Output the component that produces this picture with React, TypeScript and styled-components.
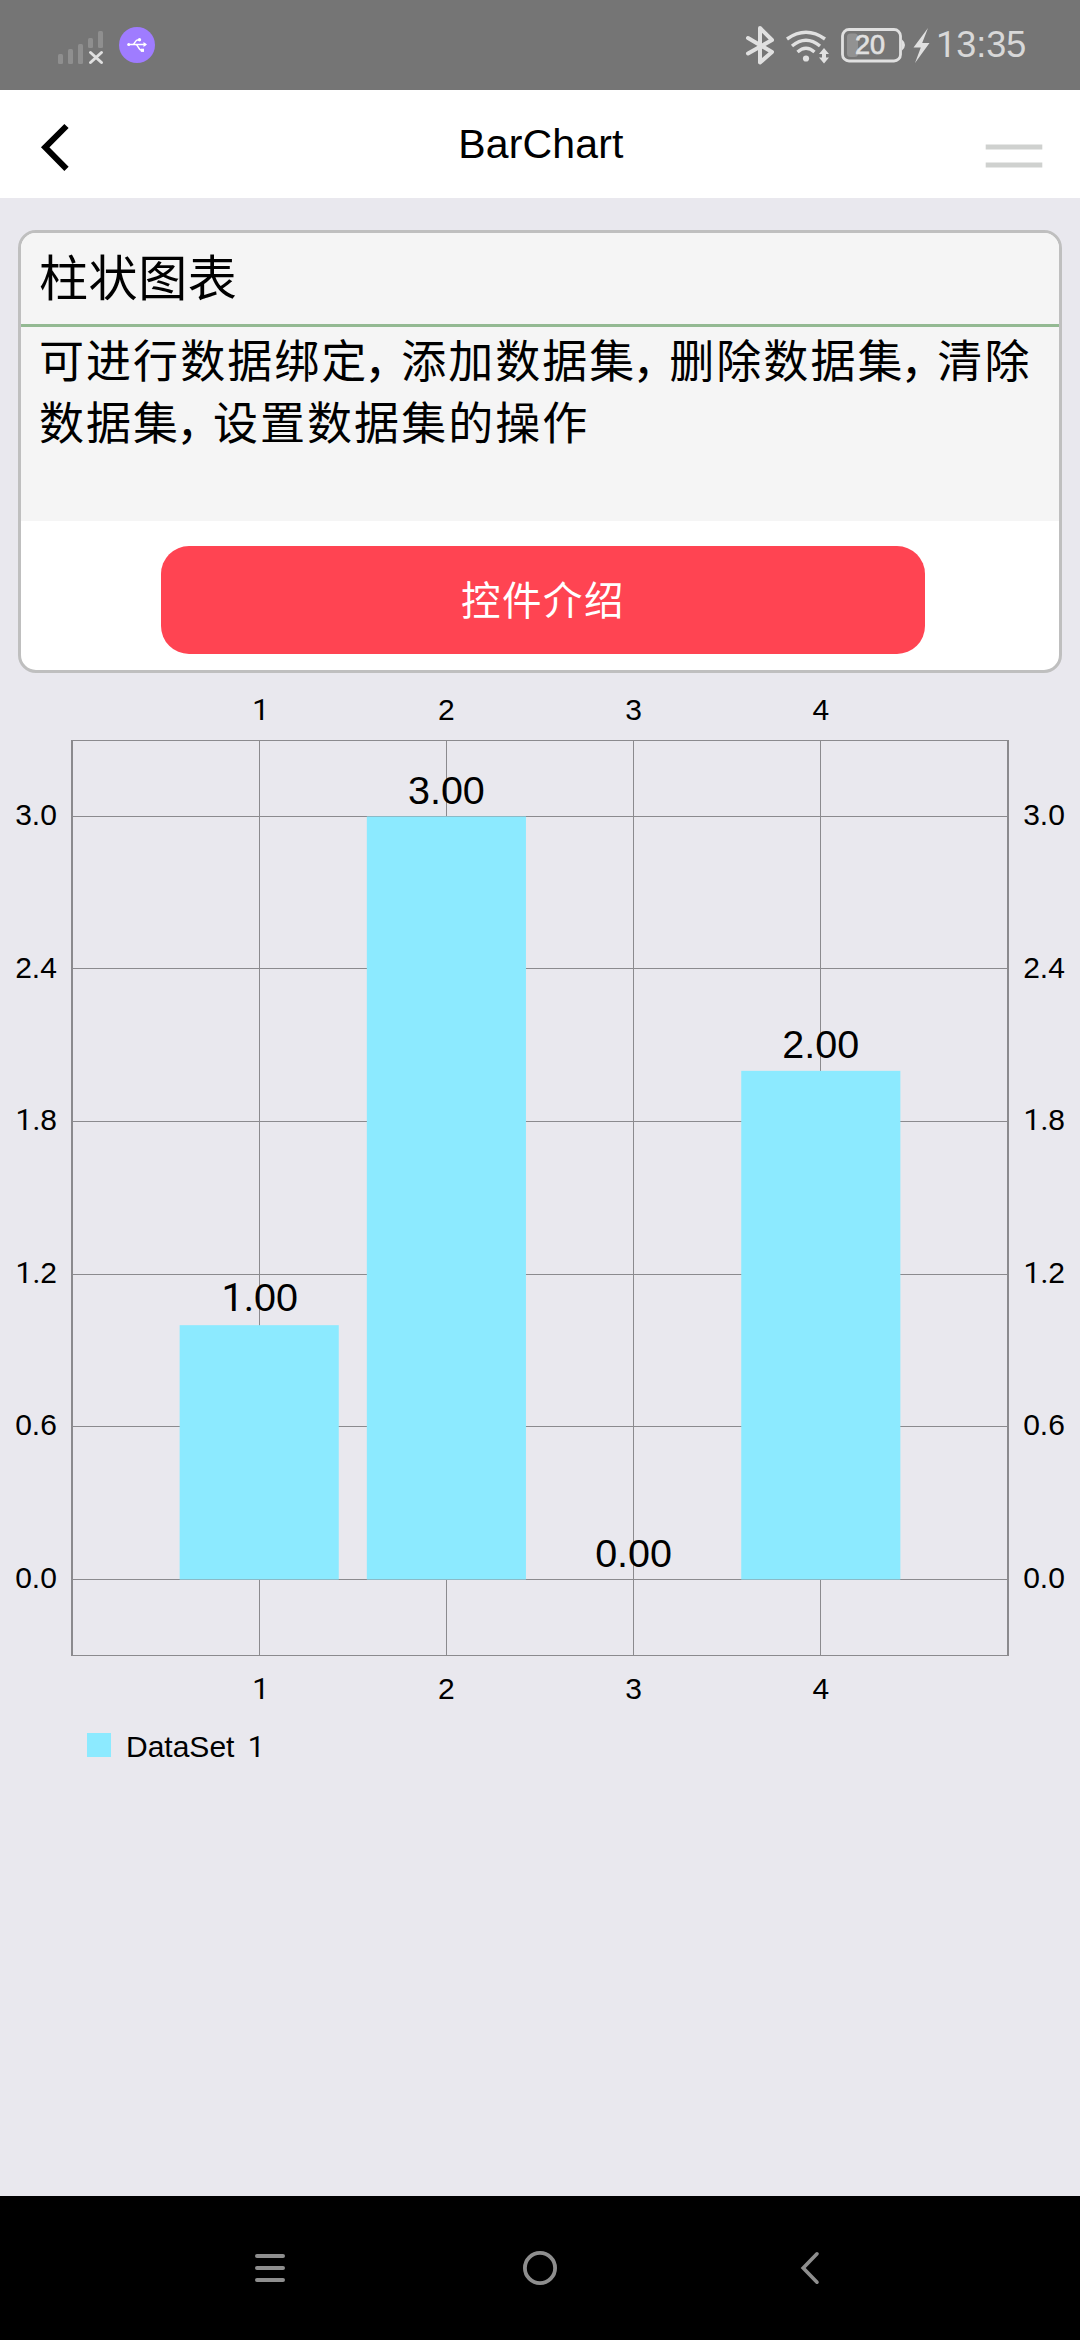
import React from "react";
import styled, { createGlobalStyle } from "styled-components";

const LATIN = `"Liberation Sans", Arial, Helvetica, sans-serif`;
const HAN = `"Noto Sans CJK SC", "Liberation Sans", sans-serif`;

const GlobalStyle = createGlobalStyle`
  * { box-sizing: border-box; }
  body { margin: 0; background: #e9e8ee; }
`;

const Screen = styled.div`
  width: 1080px;
  height: 2340px;
  display: flex;
  flex-direction: column;
  background: #e9e8ee;
  color: #000;
  font-family: ${LATIN};
  overflow: hidden;
`;

/* ---------- status bar ---------- */

const StatusBar = styled.header`
  flex: none;
  height: 90px;
  display: flex;
  justify-content: space-between;
  background: #757575;
`;

const StatusGroup = styled.div`
  display: flex;
  align-items: flex-start;
`;

const Glyph = styled.svg`
  display: block;
  flex: none;
`;

const Clock = styled.div`
  width: 144px;
  line-height: 66px;
  padding-top: 12px;
  font-size: 36px;
  color: #d8d8d8;
  white-space: nowrap;
  &::first-letter { font-family: Roboto, sans-serif; }
`;

const Battery = styled.div`
  width: 69px;
  height: 90px;
  display: grid;
  > * { grid-area: 1 / 1; }
`;

const BatteryLevel = styled.span`
  padding: 12px 0 0 18px;
  font-size: 27px;
  line-height: 66px;
  color: #e0e0e0;
  -webkit-text-stroke: 0.7px #e0e0e0;
`;

/* ---------- title bar ---------- */

const TitleBar = styled.nav`
  flex: none;
  height: 108px;
  display: grid;
  grid-template-columns: 120px 1fr 120px;
  background: #fff;
`;

const PageTitle = styled.h1`
  margin: 0;
  padding-left: 2px;
  text-align: center;
  font-size: 41px;
  font-weight: 400;
  line-height: 108px;
  letter-spacing: 0.15px;
`;

/* ---------- intro card ---------- */

const Card = styled.section`
  flex: none;
  width: 1044px;
  height: 443px;
  margin: 32px 18px 0;
  border: 3px solid #bfbfbf;
  border-radius: 18px;
  background: #fff;
  overflow: hidden;
  font-family: ${HAN};
`;

const CardTitle = styled.h2`
  margin: 0;
  height: 94px;
  padding-left: 18px;
  border-bottom: 3px solid #93b992;
  background: #f5f5f5;
  font-size: 49px;
  font-weight: 400;
  line-height: 84px;
  letter-spacing: 0.6px;
`;

const CardText = styled.p`
  margin: 0;
  height: 194px;
  padding: 1px 0 0 18px;
  background: #f5f5f5;
  font-size: 45px;
  line-height: 62px;
  letter-spacing: 2.05px;
  white-space: nowrap;
`;

const Comma = styled.span`
  margin-left: -4px;
  letter-spacing: -8.2px;
`;

const CardAction = styled.div`
  padding: 25px 0 0 140px;
`;

const ActionButton = styled.button`
  display: block;
  width: 764px;
  height: 108px;
  padding: 0 0 4px;
  border: 0;
  border-radius: 28px;
  background: #ff4452;
  color: #fff;
  font-family: ${HAN};
  font-size: 39.5px;
  letter-spacing: 1.5px;
  line-height: 104px;
`;

/* ---------- chart ---------- */

const PLOT_W = 936;
const PLOT_H = 916;
const STEP_X = PLOT_W / 5;
const UNIT_Y = 763 / 3;
const ZERO_Y = 839.5;
const LINE = "#8b8a8e";
const BAR = "#8ceaff";

const Chart = styled.section`
  flex: none;
  margin-top: 17px;
  display: grid;
  grid-template-columns: 72px ${PLOT_W}px 72px;
  grid-template-rows: 50px ${PLOT_H}px 54px;
  grid-template-areas:
    ". top ."
    "left plot right"
    ". bottom .";
`;

const AxisX = styled.div<{ $area: string; $offset: number }>`
  grid-area: ${(p) => p.$area};
  display: flex;
  justify-content: center;
  padding-top: ${(p) => p.$offset}px;
`;

const AxisY = styled.div<{ $area: string }>`
  grid-area: ${(p) => p.$area};
  display: flex;
  flex-direction: column;
`;

/* a leading 1 is set in a face whose figure has no foot serif */
const Figure = styled.div<{ $one: boolean; $nudge: number }>`
  text-align: center;
  &::first-letter {
    font-family: ${(p) => (p.$one ? "Roboto, sans-serif" : LATIN)};
    margin-left: ${(p) => (p.$one ? p.$nudge : 0)}px;
  }
`;

const TickX = styled(Figure)`
  width: ${STEP_X}px;
  font-size: 30px;
  line-height: 34px;
`;

const TickY = styled(Figure)`
  height: 152.6px;
  font-size: 30px;
  line-height: 149.5px;
`;

const Plot = styled.div`
  grid-area: plot;
  position: relative;
`;

const Grid = styled.svg`
  display: block;
  overflow: visible;
`;

const ValueLayer = styled.div`
  position: absolute;
  inset: 0;
  display: flex;
  justify-content: center;
`;

const ValueCell = styled.div`
  width: ${STEP_X}px;
  display: flex;
  flex-direction: column;
  justify-content: flex-end;
`;

const Value = styled(Figure)`
  font-size: 39.5px;
  line-height: 44px;
`;

const Legend = styled.div`
  flex: none;
  display: flex;
  align-items: center;
  height: 40px;
  margin-top: 15px;
  padding-left: 87px;
  gap: 15px;
`;

const LegendText = styled.span`
  padding-top: 3px;
  font-size: 30px;
  line-height: 40px;
  word-spacing: 5px;
`;

const Swatch = styled.i`
  width: 24px;
  height: 24px;
  background: ${BAR};
`;

const PlainOne = styled.span`
  font-family: Roboto, sans-serif;
`;

/* ---------- navigation bar ---------- */

const NavBar = styled.footer`
  flex: none;
  height: 144px;
  margin-top: auto;
  display: flex;
  justify-content: center;
  background: #000;
`;

const NavKey = styled.div`
  width: 270px;
  display: flex;
  justify-content: center;
  align-items: center;
`;

const BARS = [
  { label: "1", value: 1 },
  { label: "2", value: 3 },
  { label: "3", value: 0 },
  { label: "4", value: 2 },
];
const TICKS = ["3.0", "2.4", "1.8", "1.2", "0.6", "0.0"];
const ROWS = [76, 228, 381, 534, 686, 839];
const COLS = [187, 374, 561, 748];

function XLabels({ area, offset }: { area: string; offset: number }) {
  return (
    <AxisX $area={area} $offset={offset}>
      {BARS.map((b) => (
        <TickX key={b.label} $one={b.label === "1"} $nudge={3}>{b.label}</TickX>
      ))}
    </AxisX>
  );
}

function YLabels({ area }: { area: string }) {
  return (
    <AxisY $area={area}>
      {TICKS.map((t) => (
        <TickY key={t} $one={t[0] === "1"} $nudge={0.5}>{t}</TickY>
      ))}
    </AxisY>
  );
}

export default function App() {
  return (
    <Screen>
      <GlobalStyle />
      <StatusBar>
        <StatusGroup>
          <Glyph width="170" height="90" viewBox="0 0 170 90">
            <g fill="#8f8f8f">
              <rect x="58" y="54" width="5" height="10" rx="1.5" />
              <rect x="68" y="49" width="5" height="15" rx="1.5" />
              <rect x="78" y="44" width="5" height="20" rx="1.5" />
              <rect x="88" y="38" width="5" height="10" rx="1.5" />
              <rect x="98" y="31" width="5" height="17" rx="1.5" />
            </g>
            <path d="M90.500 52.500 101.500 62.500M101.500 52.500 90.500 62.500" stroke="#e0e0e0" strokeWidth="3" strokeLinecap="round" />
            <circle cx="137" cy="45" r="18" fill="#9f7cff" />
            <path d="M128 44.500H146M132.500 44.500C135 44.500 134.500 39.800 138.500 39.800M135.500 44.500C138.500 44.500 138 50.300 142 50.300" stroke="#fff" strokeWidth="1.400" fill="none" />
            <g fill="#fff">
              <circle cx="128.700" cy="44.500" r="1.500" />
              <path d="m143.500 42 3.500 2.500-3.500 2.500z" />
              <circle cx="139.500" cy="39.800" r="1.700" />
              <rect x="140.800" y="48.700" width="3.200" height="3.200" />
            </g>
          </Glyph>
        </StatusGroup>
        <StatusGroup>
          <Glyph width="97" height="90" viewBox="740 0 97 90">
            <path d="M748 38 772 52 760 62.500V28L772 40 748 53.500" fill="none" stroke="#e0e0e0" strokeWidth="4" strokeLinecap="round" strokeLinejoin="round" />
            <g fill="none" stroke="#e0e0e0" strokeWidth="3.400">
              <path d="M787 39Q806 25.500 825 39" />
              <path d="M792 46Q806 34.500 820 46" />
              <path d="M797.500 52Q806 44.500 814.500 52" />
            </g>
            <circle cx="806" cy="58.500" r="3.100" fill="#e0e0e0" />
            <path d="m824 48 5 6h-3v3.500h3l-5 6-5-6h3V54h-3z" fill="#e0e0e0" />
          </Glyph>
          <Battery>
            <Glyph width="69" height="90" viewBox="837 0 69 90">
              <rect x="842.500" y="29.500" width="58" height="31.500" rx="6.500" fill="none" stroke="#e0e0e0" strokeWidth="2.800" />
              <path d="M902 39.500Q905 42 905 45T902 50.500z" fill="#e0e0e0" />
              <rect x="847" y="33.500" width="11" height="23.500" rx="3.500" fill="#929292" />
            </Glyph>
            <BatteryLevel>20</BatteryLevel>
          </Battery>
          <Glyph width="30" height="90" viewBox="906 0 30 90">
            <path d="M928 28 913.500 47.500h7.300L915 63l14.500-20h-7.300z" fill="#e0e0e0" />
          </Glyph>
          <Clock>13:35</Clock>
        </StatusGroup>
      </StatusBar>

      <TitleBar>
        <Glyph width="120" height="108" viewBox="0 90 120 108">
          <path d="M66.500 126 45.200 147.300 66.500 168.800" fill="none" stroke="#000" strokeWidth="6" />
        </Glyph>
        <PageTitle>BarChart</PageTitle>
        <Glyph width="120" height="108" viewBox="960 90 120 108">
          <path d="M985.700 147H1042.300M985.700 165H1042.300" stroke="#cfd1cf" strokeWidth="5.200" />
        </Glyph>
      </TitleBar>

      <Card>
        <CardTitle>柱状图表</CardTitle>
        <CardText>
          可进行数据绑定<Comma>，</Comma>添加数据集<Comma>，</Comma>删除数据集<Comma>，</Comma>清除
          <br />
          数据集<Comma>，</Comma>设置数据集的操作
        </CardText>
        <CardAction>
          <ActionButton>控件介绍</ActionButton>
        </CardAction>
      </Card>

      <Chart>
        <XLabels area="top" offset={3} />
        <YLabels area="left" />
        <Plot>
          <Grid width={PLOT_W} height={PLOT_H} viewBox={`0 0 ${PLOT_W} ${PLOT_H}`}>
            <g fill={LINE}>
              {ROWS.map((y) => (
                <rect key={y} x="0" y={y} width={PLOT_W} height="1" />
              ))}
              {COLS.map((x) => (
                <rect key={x} x={x} y="0" width="1" height={PLOT_H} />
              ))}
              <rect x="-1" y="0" width={PLOT_W + 2} height="1" />
              <rect x="-1" y={PLOT_H - 1} width={PLOT_W + 2} height="1" />
              <rect x="-1" y="0" width="2" height={PLOT_H} />
              <rect x={PLOT_W - 1} y="0" width="2" height={PLOT_H} />
            </g>
            {BARS.map((b, i) => (
              <rect
                key={b.label}
                x={(i + 1) * STEP_X - 79.56}
                y={ZERO_Y - b.value * UNIT_Y}
                width="159.12"
                height={b.value * UNIT_Y}
                fill={BAR}
              />
            ))}
          </Grid>
          <ValueLayer>
            {BARS.map((b) => (
              <ValueCell key={b.label} style={{ paddingBottom: PLOT_H - ZERO_Y + b.value * UNIT_Y + 5 }}>
                <Value $one={b.value === 1} $nudge={1}>{b.value.toFixed(2)}</Value>
              </ValueCell>
            ))}
          </ValueLayer>
        </Plot>
        <YLabels area="right" />
        <XLabels area="bottom" offset={16} />
      </Chart>

      <Legend>
        <Swatch />
        <LegendText>DataSet <PlainOne>1</PlainOne></LegendText>
      </Legend>

      <NavBar>
        <NavKey>
          <Glyph width="30" height="28" viewBox="0 0 30 28">
            <path d="M2 2H28M2 14H28M2 26H28" stroke="#8e8e8e" strokeWidth="4" strokeLinecap="round" />
          </Glyph>
        </NavKey>
        <NavKey>
          <Glyph width="34" height="34" viewBox="0 0 34 34">
            <circle cx="17" cy="17" r="15.100" fill="none" stroke="#8e8e8e" strokeWidth="3.800" />
          </Glyph>
        </NavKey>
        <NavKey>
          <Glyph width="20" height="34" viewBox="0 0 20 34">
            <path d="M17 2.800 3.200 17 17 31.200" fill="none" stroke="#8e8e8e" strokeWidth="3.600" strokeLinecap="round" />
          </Glyph>
        </NavKey>
      </NavBar>
    </Screen>
  );
}
